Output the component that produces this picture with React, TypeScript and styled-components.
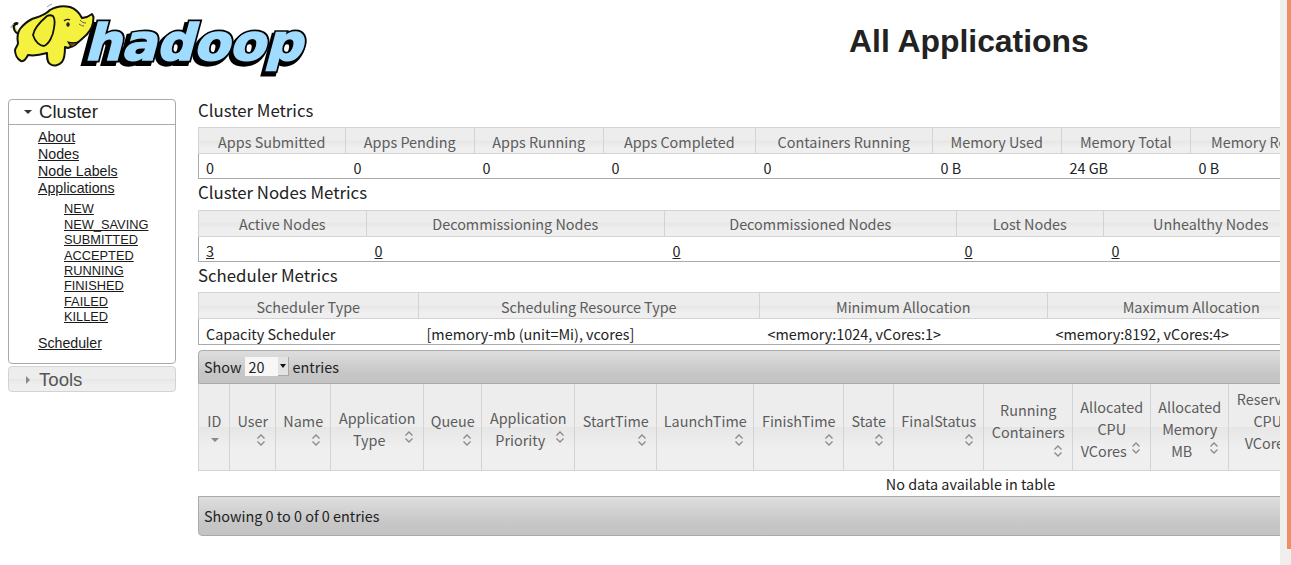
import React from 'react';
import styled, {createGlobalStyle} from 'styled-components';

const bodyFont = `"Noto Sans CJK SC", "Noto Sans", sans-serif`;
const navFont = `"Liberation Sans", Arial, sans-serif`;

const GlobalStyle = createGlobalStyle`
html, body {
    margin: 0;
    height: 565px;
    overflow: hidden;
    background: #fff;
}
`;

const metrics = [
    {
        title: 'Cluster Metrics',
        cols: [147, 129, 129, 152, 177, 129, 129, 162],
        heads: ['Apps Submitted', 'Apps Pending', 'Apps Running', 'Apps Completed', 'Containers Running', 'Memory Used', 'Memory Total', 'Memory Reserved'],
        cells: ['0', '0', '0', '0', '0', '0 B', '24 GB', '0 B'],
        links: false,
        tall: false
    },
    {
        title: 'Cluster Nodes Metrics',
        cols: [168, 298, 292, 147, 215],
        heads: ['Active Nodes', 'Decommissioning Nodes', 'Decommissioned Nodes', 'Lost Nodes', 'Unhealthy Nodes'],
        cells: ['3', '0', '0', '0', '0'],
        links: true,
        tall: false
    },
    {
        title: 'Scheduler Metrics',
        cols: [220, 341, 288, 288],
        heads: ['Scheduler Type', 'Scheduling Resource Type', 'Minimum Allocation', 'Maximum Allocation'],
        cells: ['Capacity Scheduler', '[memory-mb (unit=Mi), vcores]', '<memory:1024, vCores:1>', '<memory:8192, vCores:4>'],
        links: false,
        tall: true
    }
];

const appColumns: [string, number][] = [
    ['ID', 31], ['User', 46], ['Name', 55], ['Application Type', 93], ['Queue', 58],
    ['Application Priority', 93], ['StartTime', 82], ['LaunchTime', 97], ['FinishTime', 90],
    ['State', 50], ['FinalStatus', 90], ['Running Containers', 89], ['Allocated CPU VCores', 78],
    ['Allocated Memory MB', 78], ['Reserved CPU VCores', 78], ['Reserved Memory MB', 78],
    ['% of Queue', 70], ['% of Cluster', 70], ['Progress', 72], ['Tracking UI', 70], ['Blacklisted Nodes', 76]
];

const clusterLinks = ['About', 'Nodes', 'Node Labels', 'Applications'];
const appStates = ['NEW', 'NEW_SAVING', 'SUBMITTED', 'ACCEPTED', 'RUNNING', 'FINISHED', 'FAILED', 'KILLED'];

const Logo = () => (
    <LogoSvg viewBox="0 0 310 78" width={310} height={78}>
        {/* word mark */}
        <g fontFamily='"DejaVu Sans", sans-serif' fontWeight="700" fontSize="50">
            <text transform="translate(80 63) skewX(-15)" textLength="220" lengthAdjust="spacingAndGlyphs" fill="#000" stroke="#000" strokeWidth="6">hadoop</text>
            <text transform="translate(84 60) skewX(-15)" textLength="218" lengthAdjust="spacingAndGlyphs" fill="#000" stroke="#000" strokeWidth="5">hadoop</text>
            <text transform="translate(84 60) skewX(-15)" textLength="218" lengthAdjust="spacingAndGlyphs" fill="#9fdcff" stroke="#9fdcff" strokeWidth="1.6">hadoop</text>
        </g>
        {/* elephant */}
        <path d="M18 33c-3-1-4-5-4-7 0-2 2-3 4-2" fill="none" stroke="#111" strokeWidth="3"/>
        <path d="M18 32c-2-1-2.500-4-2.500-6" fill="none" stroke="#f4f23e" strokeWidth="1.2"/>
        <path
            d="M50 10C55 7 62 5 70 7c6 2 10 7 12 11l5-1 5-3 1.500 3-.500 6c-1 5-5 11-10 15l-8 7-7 3-3-1c0 5 0 11-3 15-3 3-8 5-12 2-3-2-3-6-3-11-7 2-14 3-19 2-2 4-4 7-7 6-4-2-6-7-6-11 1-3 3-5 3-7-1-5 0-11 2-14 3-4 8-8 12-10 6-2 12-3 18-9z"
            fill="#f4f23e" stroke="#111" strokeWidth="2" strokeLinejoin="round"
        />
        <path
            d="M47 16C40 22 34 29 33 35c2 7 7 11 11 11 5-2 9-10 10-18 1-5 1-9-1-12-2-1-4-1-6 0z"
            fill="#f3f03c" stroke="#111" strokeWidth="1.8" strokeLinejoin="round"
        />
        <path d="M64 21c2-2 5-2 6-1" fill="none" stroke="#222" strokeWidth="1.2"/>
        <ellipse cx="68" cy="24.500" rx="1.700" ry="2.300" fill="#222"/>
        <path d="M80 20c2 2 3 3 6 3M79 24c2 1 3 2 5 2" fill="none" stroke="#555" strokeWidth="1"/>
        <path d="M68 42c1 2 2 4 4 5 3-1 5-3 6-5-3 1-7 1-10 0z" fill="#7a4a14" stroke="#111" strokeWidth="1.100"/>
        <path d="M47 7c1-1 3-2 5-3M11 28c0-2 1-3 3-4" fill="none" stroke="#999" strokeWidth="1"/>
    </LogoSvg>
);

const SortIcon = ({active, stacked}: {active?: boolean; stacked?: boolean}) => (
    <SortBox $stacked={stacked}>
        {active ? (
            <svg viewBox="0 0 16 16" width={16} height={16}><path d="M4 6h8l-4 4z" fill="#888"/></svg>
        ) : (
            <svg viewBox="0 0 16 16" width={16} height={16}>
                <path d="M4.500 6.500 8 3l3.500 3.500M4.500 9.500 8 13l3.500-3.500" fill="none" stroke="#8a8a8a" strokeWidth="1.300"/>
            </svg>
        )}
    </SortBox>
);

const App: React.FC = () => {
    return (
        <Page>
            <GlobalStyle/>
            <Main>
                <Header>
                    <Logo/>
                    <PageTitle>All Applications</PageTitle>
                </Header>
                <Body>
                    <Sidebar>
                        <Panel>
                            <PanelHead>
                                <ArrowDown/>
                                Cluster
                            </PanelHead>
                            <NavList>
                                {clusterLinks.map(l => <NavLink href="#" key={l}>{l}</NavLink>)}
                                <SubList>
                                    {appStates.map(s => <SubLink href="#" key={s}>{s}</SubLink>)}
                                </SubList>
                                <NavLink href="#">Scheduler</NavLink>
                            </NavList>
                        </Panel>
                        <ClosedPanel>
                            <ArrowRight/>
                            Tools
                        </ClosedPanel>
                    </Sidebar>
                    <Content>
                        {metrics.map(m => (
                            <section key={m.title}>
                                <SectionTitle>{m.title}</SectionTitle>
                                <MetricTable>
                                    <colgroup>
                                        {m.cols.map((w, i) => <col key={i} width={w}/>)}
                                    </colgroup>
                                    <thead>
                                    <tr>{m.heads.map(h => <MetricHead key={h}>{h}</MetricHead>)}</tr>
                                    </thead>
                                    <tbody>
                                    <tr>
                                        {m.cells.map((c, i) => (
                                            <MetricCell key={i} $tall={m.tall}>
                                                {m.links ? <CellLink href="#">{c}</CellLink> : c}
                                            </MetricCell>
                                        ))}
                                    </tr>
                                    </tbody>
                                </MetricTable>
                            </section>
                        ))}
                        <TopBar>
                            Show
                            <FakeSelect>
                                <SelectValue>20</SelectValue>
                                <SelectArrow/>
                            </FakeSelect>
                            entries
                        </TopBar>
                        <AppTable>
                            <colgroup>
                                {appColumns.map(([name, w]) => <col key={name} width={w}/>)}
                            </colgroup>
                            <thead>
                            <tr>
                                {appColumns.map(([name], i) => (
                                    <AppHead key={name}>
                                        {name}
                                        <SortIcon active={i === 0} stacked={name.startsWith('Reserved')}/>
                                    </AppHead>
                                ))}
                            </tr>
                            </thead>
                            <tbody>
                            <tr>
                                <EmptyCell colSpan={appColumns.length}>No data available in table</EmptyCell>
                            </tr>
                            </tbody>
                        </AppTable>
                        <BottomBar>Showing 0 to 0 of 0 entries</BottomBar>
                    </Content>
                </Body>
            </Main>
            <ScrollTrack>
                <ScrollThumb/>
            </ScrollTrack>
        </Page>
    );
};

export default App;

const Page = styled.div`
display: flex;
height: 565px;
width: 1291px;
overflow: hidden;
font-family: ${bodyFont};
`;

const Main = styled.main`
width: 1280px;
flex: none;
overflow: hidden;
`;

const ScrollTrack = styled.div`
width: 11px;
flex: none;
background: #f1efee;
display: flex;
justify-content: flex-end;
`;

const ScrollThumb = styled.div`
width: 4px;
height: 549px;
background: #f28e63;
`;

const Header = styled.header`
display: flex;
align-items: flex-start;
height: 96.5px;
`;

const LogoSvg = styled.svg`
flex: none;
display: block;
`;

const PageTitle = styled.h1`
margin: 21px 0 0 539px;
font: bold 31.9px/40px ${navFont};
color: #222;
white-space: nowrap;
`;

const Body = styled.div`
display: flex;
align-items: flex-start;
`;

const Sidebar = styled.nav`
width: 168px;
flex: none;
margin: 2.5px 22px 0 8px;
font-family: ${navFont};
`;

const Panel = styled.div`
border: 1px solid #aaa;
border-radius: 4px;
box-sizing: border-box;
height: 265px;
`;

const PanelHead = styled.div`
display: flex;
align-items: center;
height: 25px;
box-sizing: border-box;
padding: 0 0 0 15px;
border-bottom: 1px solid #aaa;
font-size: 18.6px;
color: #222;
`;

const ArrowDown = styled.span`
width: 0;
height: 0;
margin-right: 7px;
border-left: 4px solid transparent;
border-right: 4px solid transparent;
border-top: 4px solid #333;
`;

const ArrowRight = styled.span`
width: 0;
height: 0;
margin: 0 9px 0 2px;
border-top: 4px solid transparent;
border-bottom: 4px solid transparent;
border-left: 4px solid #888;
`;

const ClosedPanel = styled.div`
display: flex;
align-items: center;
height: 26px;
margin-top: 2px;
padding: 1px 0 0 15px;
box-sizing: border-box;
border: 1px solid #d3d3d3;
border-radius: 4px;
background: linear-gradient(#ededed 50%, #e6e6e6 50%, #efefef 75%);
font-size: 18.6px;
color: #555;
`;

const NavList = styled.div`
display: flex;
flex-direction: column;
align-items: flex-start;
padding: 4px 0 0 29px;
`;

const NavLink = styled.a`
font-size: 14.2px;
line-height: 17px;
color: #1a1a1a;
`;

const SubList = styled.div`
display: flex;
flex-direction: column;
align-items: flex-start;
padding: 4.4px 0 10.6px 26px;
`;

const SubLink = styled.a`
font-size: 12.8px;
line-height: 15.4px;
color: #1a1a1a;
`;

const Content = styled.div`
flex: none;
width: 1544px;
`;

const SectionTitle = styled.h3`
margin: 0;
height: 30.5px;
font-size: 16.8px;
font-weight: 400;
line-height: 27px;
color: #222;
`;

const MetricTable = styled.table`
border-collapse: collapse;
table-layout: fixed;
width: 1px;
font-size: 14.4px;
`;

const MetricHead = styled.th`
height: 26px;
padding: 2px 8.5px 0 8px;
box-sizing: border-box;
font-weight: 400;
line-height: 22px;
color: #5c5c5c;
white-space: nowrap;
overflow: hidden;
text-align: center;
border: 1px solid #d3d3d3;
background: linear-gradient(#ededed 50%, #e6e6e6 50%, #efefef 75%);
`;

const MetricCell = styled.td<{$tall?: boolean}>`
height: ${p => (p.$tall ? 26 : 25)}px;
padding: 3px 8px 0;
box-sizing: border-box;
line-height: 21px;
color: #222;
white-space: nowrap;
border-bottom: 1px solid #aaa;
&:first-child {
    padding-left: 7px;
    border-left: 1px solid #aaa;
}
`;

const CellLink = styled.a`
color: #222;
`;

const barStyle = `
display: flex;
align-items: center;
box-sizing: border-box;
padding: 0 0 2px 5px;
border: 1px solid #aaa;
background: linear-gradient(#dedede, #c6c6c6 70%, #c4c4c4);
font-size: 14.4px;
color: #222;
`;

const TopBar = styled.div`
${barStyle}
height: 34px;
margin-top: 5px;
border-radius: 4px 0 0 0;
gap: 3px;
`;

const BottomBar = styled.div`
${barStyle}
height: 40px;
border-radius: 0 0 0 4px;
`;

const FakeSelect = styled.div`
display: flex;
width: 44px;
height: 19px;
margin-right: 1px;
background: #f7f7f7;
`;

const SelectValue = styled.span`
flex: 1;
padding-left: 4px;
line-height: 19px;
`;

const SelectArrow = styled.span`
position: relative;
width: 11px;
background: #e2e2e2;
border-right: 1px solid #a8a8a8;
border-bottom: 1px solid #a8a8a8;
box-sizing: border-box;
&::after {
    content: '';
    position: absolute;
    left: 2px;
    top: 7px;
    border-left: 3px solid transparent;
    border-right: 3px solid transparent;
    border-top: 4px solid #111;
}
`;

const AppTable = styled.table`
border-collapse: collapse;
table-layout: fixed;
width: 1544px;
font-size: 14.4px;
`;

const AppHead = styled.th`
padding: 4px 6px 0 6.5px;
box-sizing: border-box;
height: 86px;
font-weight: 400;
line-height: 22px;
color: #5c5c5c;
text-align: center;
vertical-align: middle;
border: 1px solid #d3d3d3;
border-top: 0;
background: linear-gradient(#ededed 50%, #e6e6e6 50%, #efefef 75%);
`;

const SortBox = styled.span<{$stacked?: boolean}>`
float: ${p => (p.$stacked ? 'none' : 'right')};
display: block;
width: 16px;
height: 16px;
margin-left: ${p => (p.$stacked ? 'auto' : '0')};
svg {
    display: block;
}
`;

const EmptyCell = styled.td`
height: 25px;
padding: 0;
text-align: center;
line-height: 22px;
color: #222;
`;
